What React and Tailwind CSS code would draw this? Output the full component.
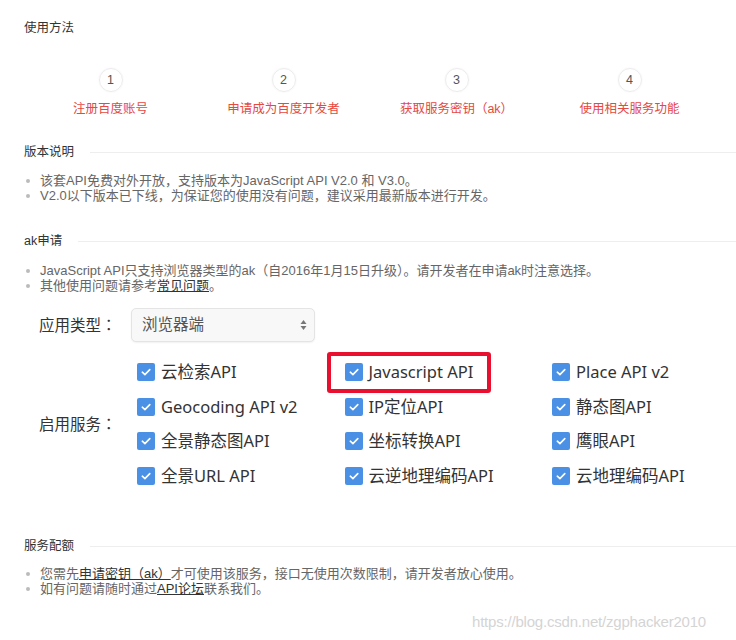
import React from "react";

const small = { fontFamily: '"Liberation Sans", "Noto Sans CJK SC", sans-serif' };
const big = { fontFamily: '"Noto Sans", "Noto Sans CJK SC", sans-serif' };
const tc = { fontFamily: '"Noto Sans CJK TC", sans-serif' };

function Heading({ children, line = true }) {
  return (
    <div className="flex items-center h-4">
      <div className="text-[12.5px] leading-4 text-[#333] whitespace-nowrap">{children}</div>
      {line && <div className="flex-1 h-px bg-[#eeeeee] ml-4" />}
    </div>
  );
}

function Bullet({ children }) {
  return (
    <li className="flex items-center h-[15px] text-[13px] leading-[15px] text-[#666] whitespace-nowrap">
      <span className="w-[4px] h-[4px] rounded-full bg-[#bbbbbb] ml-[2px] mr-[10px] shrink-0" />
      <span>{children}</span>
    </li>
  );
}

function Check({ label, box }) {
  return (
    <div className="relative flex items-center h-[34.6px]">
      {box && (
        <div className="absolute left-[-18px] top-[-3px] w-[164px] h-[41px] border-[4px] border-[#e8102e] rounded-[3px]" />
      )}
      <span className="w-[18px] h-[18px] rounded-[2px] bg-[#4a91e6] flex items-center justify-center shrink-0">
        <svg width="12" height="12" viewBox="0 0 12 12" fill="none">
          <path d="M2.3 6.2 L4.9 8.6 L9.8 3.6" stroke="white" strokeWidth="1.6" strokeLinecap="round" strokeLinejoin="round" />
        </svg>
      </span>
      <span className="ml-[6px] text-[16.5px] text-[#333] whitespace-nowrap" style={big}>
        {label}
      </span>
    </div>
  );
}

export default function App() {
  const steps = ["注册百度账号", "申请成为百度开发者", "获取服务密钥（ak）", "使用相关服务功能"];
  const services = [
    ["云检索API", false],
    ["Javascript API", true],
    ["Place API v2", false],
    ["Geocoding API v2", false],
    ["IP定位API", false],
    ["静态图API", false],
    ["全景静态图API", false],
    ["坐标转换API", false],
    ["鹰眼API", false],
    ["全景URL API", false],
    ["云逆地理编码API", false],
    ["云地理编码API", false],
  ];
  return (
    <div className="relative w-[736px] h-[640px] bg-white overflow-hidden" style={small}>
      <div className="pl-6 pt-5">
        <Heading line={false}>使用方法</Heading>

        <div className="grid grid-cols-4 w-[692px] mt-[32px]">
          {steps.map((s, i) => (
            <div key={i} className="flex flex-col items-center">
              <div className="w-6 h-6 rounded-full border border-[#ececec] shadow-[0_0_2px_rgba(0,0,0,0.06)] flex items-center justify-center text-[12.5px] text-[#555]">
                {i + 1}
              </div>
              <div className="mt-[9px] text-[12.5px] leading-4 text-[#e5493f] whitespace-nowrap">{s}</div>
            </div>
          ))}
        </div>

        <div className="mt-[27px]">
          <Heading>版本说明</Heading>
        </div>
        <ul className="mt-[13px]">
          <Bullet>该套API免费对外开放，支持版本为JavaScript API V2.0 和 V3.0。</Bullet>
          <Bullet>V2.0以下版本已下线，为保证您的使用没有问题，建议采用最新版本进行开发。</Bullet>
        </ul>

        <div className="mt-[30px]">
          <Heading>ak申请</Heading>
        </div>
        <ul className="mt-[14px]">
          <Bullet>JavaScript API只支持浏览器类型的ak（自2016年1月15日升级）。请开发者在申请ak时注意选择。</Bullet>
          <Bullet>
            其他使用问题请参考<span className="underline text-[#333]">常见问题</span>。
          </Bullet>
        </ul>

        <div className="mt-[15px] pl-[15px]" style={big}>
          <div className="flex items-center">
            <div className="w-[92px] text-[15.5px] text-[#333] whitespace-nowrap">
              应用类型<span style={tc}>：</span>
            </div>
            <div className="w-[184px] h-[34px] rounded-[5px] border border-[#e4e4e4] bg-[#f8f8f8] shadow-[0_1px_2px_rgba(0,0,0,0.06)] flex items-center justify-between pl-[10px] pr-[7px]">
              <span className="text-[15.5px] text-[#555]">浏览器端</span>
              <svg width="7" height="12" viewBox="0 0 7 12">
                <path d="M3.5 1 L6.5 5 L0.5 5 Z" fill="#777" />
                <path d="M3.5 11 L6.5 7 L0.5 7 Z" fill="#777" />
              </svg>
            </div>
          </div>

          <div className="flex items-center mt-[13px]">
            <div className="w-[98px] text-[15.5px] text-[#333] whitespace-nowrap">
              启用服务<span style={tc}>：</span>
            </div>
            <div className="grid grid-cols-[207.5px_207.5px_160px]">
              {services.map(([l, b], i) => (
                <Check key={i} label={l} box={b} />
              ))}
            </div>
          </div>
        </div>

        <div className="mt-[45px]">
          <Heading>服务配额</Heading>
        </div>
        <ul className="mt-[12px]">
          <Bullet>
            您需先<span className="underline text-[#333]">申请密钥（ak）</span>才可使用该服务，接口无使用次数限制，请开发者放心使用。
          </Bullet>
          <Bullet>
            如有问题请随时通过<span className="underline text-[#333]">API论坛</span>联系我们。
          </Bullet>
        </ul>
      </div>

      <div className="absolute left-[472px] top-[612px] text-[15px] leading-5 text-[#d4d4d4] whitespace-nowrap tracking-[-0.2px]">
        https://blog.csdn.net/zgphacker2010
      </div>
    </div>
  );
}
